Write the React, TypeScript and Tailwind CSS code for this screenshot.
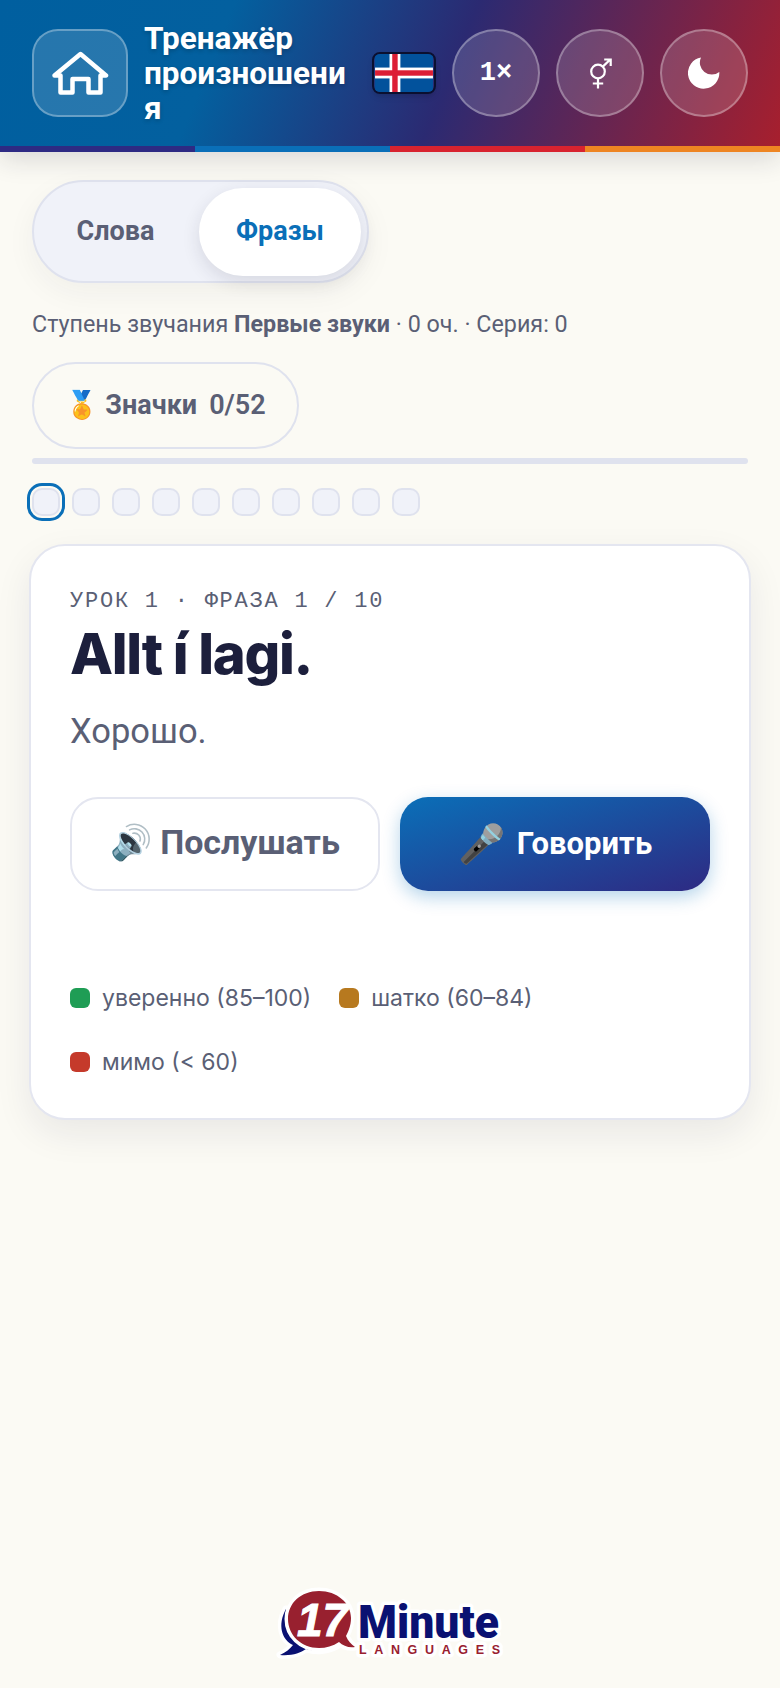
const segments = ["bg-[#2e2a83]", "bg-[#0a6fb8]", "bg-[#d8232f]", "bg-[#ee8522]"];
const dots = Array.from({ length: 10 }, (_, i) => i);

const HomeIcon = () => (
  <svg width="58" height="44" viewBox="52 50 58 44" fill="none" stroke="white" strokeWidth="4.5" strokeLinecap="round" strokeLinejoin="round">
    <path d="M55.5 74.5 L81.5 53 L107 74.5 H101.5 V91.5 H89.5 V78 H73.5 V91.5 H61.5 V74.5 Z" />
  </svg>
);

const Flag = () => (
  <svg width="64" height="42" viewBox="0 0 64 42" className="shrink-0 rounded-lg border-2 border-[#0b1030] shadow-md">
    <rect width="64" height="42" fill="#02529c" />
    <rect x="16" width="12" height="42" fill="#fff" />
    <rect y="15" width="64" height="12" fill="#fff" />
    <rect x="19" width="6" height="42" fill="#dc1e35" />
    <rect y="18" width="64" height="6" fill="#dc1e35" />
  </svg>
);

const GenderIcon = () => (
  <svg width="22" height="31" viewBox="0 0 22 31" fill="none" stroke="white" strokeWidth="2.2" className="translate-x-[1px]">
    <circle cx="8" cy="13.5" r="6.8" />
    <path d="M8 20.5 V30.5 M2.8 25.5 H13.2 M12.8 8.6 L20.5 1.2 M14.2 1.5 H20.7 V8" />
  </svg>
);

const MoonIcon = () => (
  <svg width="32" height="32" viewBox="0 0 32 32" fill="white">
    <path d="M13 0.5 A15.7 15.7 0 1 0 31.3 15 A12 12 0 0 1 13 0.5 Z" />
  </svg>
);

const Logo = () => (
  <svg width="260" height="118" viewBox="0 0 260 118">
    <g stroke="#fff" strokeWidth="7" strokeLinejoin="round" style={{ paintOrder: "stroke" }}>
      <path d="M26 39 C17 55 22 70 33 75 C30 79 26 82 20 85 C32 86 40 83 46 79 C56 82 68 81 77 76 C60 80 36 76 30 60 C28 52 27 45 26 39 Z" fill="#0a1172" />
      <path d="M59 21 C77 21 91 33 91 48 C91 56 88 62 86 66 C88 71 91 74 95 77 C89 78 83 76 79 72 C73 76 66 78 59 78 C41 78 28 65 28 49 C28 33 41 21 59 21 Z" fill="#98202f" />
      <text x="98" y="68" fontFamily="Roboto, sans-serif" fontWeight="900" fontSize="46" fill="#0a1172" textLength="141" lengthAdjust="spacingAndGlyphs">Minute</text>
      <text x="99" y="84" fontFamily="Liberation Sans, sans-serif" fontWeight="700" fontSize="12.5" fill="#98202f" textLength="141">LANGUAGES</text>
    </g>
    <text x="37" y="66" fontFamily="Liberation Sans, sans-serif" fontWeight="700" fontStyle="italic" fontSize="46" fill="#fff" stroke="#fff" strokeWidth="1">17</text>
  </svg>
);

const RoundButton = ({ children }: { children: React.ReactNode }) => (
  <button className="flex h-[88px] w-[88px] shrink-0 items-center justify-center rounded-full border-2 border-white/30 bg-white/15 text-white">
    {children}
  </button>
);

const LegendItem = ({ color, label }: { color: string; label: string }) => (
  <div className="flex items-center gap-3">
    <span className={`h-5 w-5 rounded-md ${color}`} />
    <span className="font-[Inter,sans-serif] text-[23px] text-[#5a5f75]">{label}</span>
  </div>
);

export default function App() {
  return (
    <div className="flex min-h-[1688px] flex-col bg-[#fbfaf4] font-[Roboto,sans-serif]">
      <header className="relative z-10 bg-[linear-gradient(112deg,#005f9f_0%,#03609f_28%,#2b2a72_57%,#a81f2d_100%)] shadow-[0_8px_24px_rgba(30,30,50,0.14)]">
        <div className="flex h-[146px] items-center gap-4 px-8">
          <button className="flex h-[88px] w-[96px] shrink-0 items-center justify-center rounded-[26px] border-2 border-white/30 bg-white/15">
            <HomeIcon />
          </button>
          <h1 className="min-w-0 flex-1 text-[31.5px] leading-[35px] font-bold text-white [overflow-wrap:anywhere] [text-shadow:0_2px_4px_rgba(0,0,0,0.2)]">
            Тренажёр произношения
          </h1>
          <Flag />
          <RoundButton>
            <span className="font-['Liberation_Mono',monospace] text-[27px] font-bold">1×</span>
          </RoundButton>
          <RoundButton>
            <GenderIcon />
          </RoundButton>
          <RoundButton>
            <MoonIcon />
          </RoundButton>
        </div>
        <div className="grid h-1.5 grid-cols-4">
          {segments.map((c) => (
            <div key={c} className={c} />
          ))}
        </div>
      </header>

      <main className="flex flex-col px-8 pt-7">
        <div className="flex h-[103px] w-[337px] items-center rounded-full border-2 border-[#dfe2ee] bg-[#f0f2f9] p-[6px] text-[27px] font-bold shadow-[0_10px_30px_rgba(30,30,60,0.05)]">
          <button className="flex-1 pr-2 text-[#5a5f75]">Слова</button>
          <button className="h-[88px] w-[162px] rounded-full bg-white text-[#0a6fb8] shadow-[0_6px_18px_rgba(30,30,60,0.12)]">Фразы</button>
        </div>

        <p className="mt-[26px] text-[23.3px] leading-[30px] text-[#5a5f75]">
          Ступень звучания <b className="font-bold">Первые звуки</b> · 0 оч. · Серия: 0
        </p>

        <button className="mt-[23px] flex h-[87px] w-[267px] items-center justify-center gap-1.5 rounded-full border-2 border-[#dfe2ee] text-[27px] font-bold text-[#5a5f75]">
          <span>🏅</span>
          <span>Значки</span>
          <span className="ml-1.5 font-semibold">0/52</span>
        </button>

        <div className="mt-[9px] h-1.5 rounded-full bg-[#dfe2ee]" />

        <div className="mt-6 flex gap-3">
          {dots.map((i) => (
            <span
              key={i}
              className={`h-7 w-7 rounded-[10px] border-2 border-[#dfe2ee] bg-[#f0f2f9] ${i === 0 ? "outline-[3px] outline-offset-2 outline-[#0a6fb8]" : ""}`}
            />
          ))}
        </div>

        <section className="mx-[-3px] mt-7 flex h-[576px] flex-col rounded-[36px] border-2 border-[#e4e6f0] bg-white px-[39px] pt-[42px] shadow-[0_14px_36px_rgba(30,30,60,0.08)]">
          <div className="font-['Liberation_Mono',monospace] text-[22px] leading-[28px] tracking-[1.76px] text-[#5a5f75]">УРОК 1 · ФРАЗА 1 / 10</div>
          <h2 className="mt-[2px] font-[Inter,sans-serif] text-[56px] leading-[72px] font-extrabold tracking-[-1.3px] text-[#1c1f3c]">Allt í lagi.</h2>
          <p className="mt-[19px] text-[34.5px] leading-[44px] text-[#5a5f75]">Хорошо.</p>
          <div className="mt-[44px] grid grid-cols-2 gap-5">
            <button className="flex h-[94px] items-center justify-center gap-2 rounded-[28px] border-2 border-[#e4e6f0] bg-white pb-1 text-[34px] font-bold text-[#5a5f75]">
              <span>🔊</span>Послушать
            </button>
            <button className="flex h-[94px] items-center justify-center gap-3 rounded-[28px] bg-linear-to-br/srgb from-[#0a6fb8] to-[#2e2a83] text-[31px] font-bold text-white shadow-[0_6px_18px_rgba(10,111,184,0.3)]">
              <span className="text-[38px]">🎤</span>Говорить
            </button>
          </div>
          <div className="mt-[90px] flex flex-wrap gap-x-7 gap-y-[29px]">
            <LegendItem color="bg-[#1f9d55]" label="уверенно (85–100)" />
            <LegendItem color="bg-[#b7791f]" label="шатко (60–84)" />
            <LegendItem color="bg-[#c53a2b]" label="мимо (< 60)" />
          </div>
        </section>
      </main>

      <footer className="mt-auto flex justify-center">
        <Logo />
      </footer>
    </div>
  );
}
